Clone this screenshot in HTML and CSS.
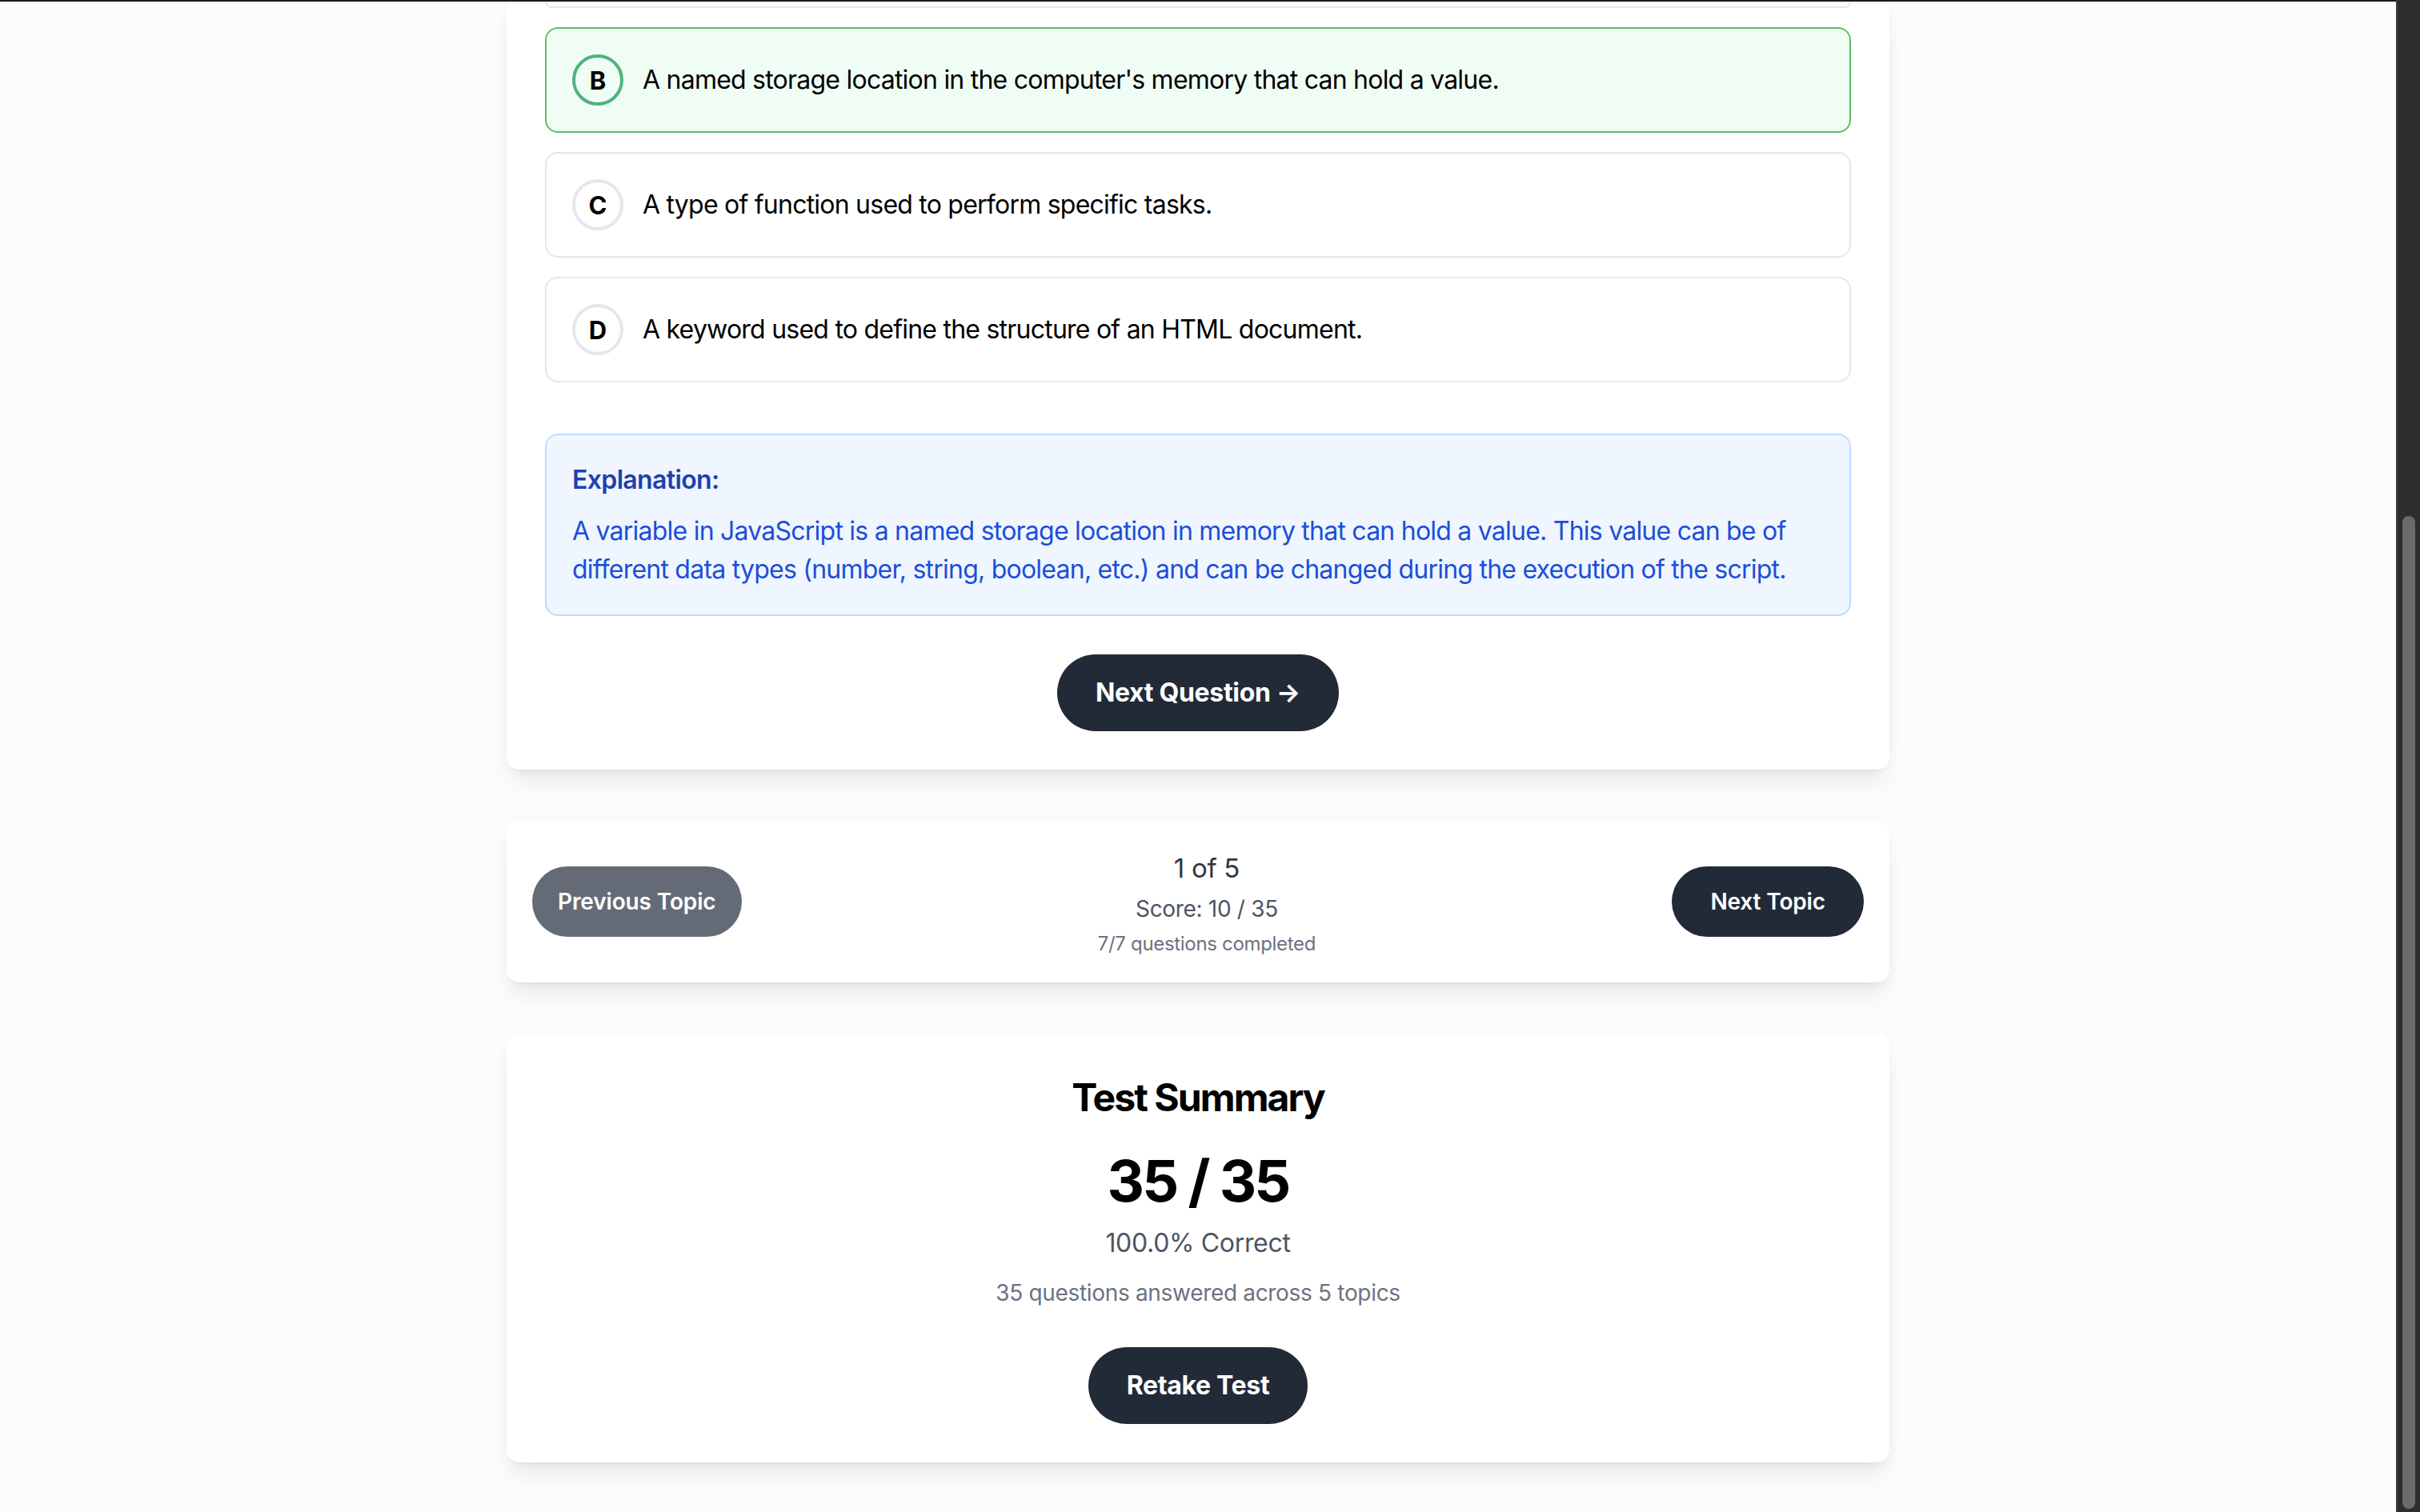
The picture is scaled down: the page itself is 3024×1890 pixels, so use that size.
FILE: index.html
```html
<!DOCTYPE html>
<html lang="en">
<head>
<meta charset="utf-8">
<title>Quiz</title>
<link rel="stylesheet" href="styles.css">
</head>
<body>
<div class="window">
  <main class="page">
    <div class="container">
      <section class="card quiz">
        <div class="options">
          <div class="option option-cut"></div>
          <div class="option selected">
            <span class="letter">B</span>
            <span class="option-text">A named storage location in the computer's memory that can hold a value.</span>
          </div>
          <div class="option">
            <span class="letter">C</span>
            <span class="option-text">A type of function used to perform specific tasks.</span>
          </div>
          <div class="option">
            <span class="letter">D</span>
            <span class="option-text">A keyword used to define the structure of an HTML document.</span>
          </div>
        </div>
        <div class="explanation">
          <h3 class="explanation-title">Explanation:</h3>
          <p class="explanation-text">A variable in JavaScript is a named storage location in memory that can hold a value. This value can be of different data types (number, string, boolean, etc.) and can be changed during the execution of the script.</p>
        </div>
        <div class="actions">
          <button class="btn btn-dark">Next Question →</button>
        </div>
      </section>

      <section class="card nav">
        <button class="btn-sm btn-gray">Previous Topic</button>
        <div class="nav-info">
          <div class="nav-count">1 of 5</div>
          <div class="nav-score">Score: 10 / 35</div>
          <div class="nav-done">7/7 questions completed</div>
        </div>
        <button class="btn-sm btn-dark btn-wide">Next Topic</button>
      </section>

      <section class="card summary">
        <h2 class="summary-title">Test Summary</h2>
        <div class="summary-score">35 / 35</div>
        <div class="summary-pct">100.0% Correct</div>
        <div class="summary-sub">35 questions answered across 5 topics</div>
        <div class="actions">
          <button class="btn btn-dark">Retake Test</button>
        </div>
      </section>
    </div>
  </main>
  <aside class="scrollbar"><div class="thumb"></div></aside>
</div>
</body>
</html>
```

FILE: styles.css
```css
* { box-sizing: border-box; }
html, body {
  margin: 0;
  padding: 0;
  height: 100%;
  overflow: hidden;
}
body {
  font-family: Inter, "Liberation Sans", Arial, sans-serif;
  color: #000;
  background: #fcfcfc;
  letter-spacing: -0.02em;
}
.window {
  display: flex;
  height: 1890px;
  width: 3024px;
}
.page {
  flex: 1;
  border-top: 2px solid #1a1a1a;
  background: #fcfcfc;
  overflow: hidden;
}
.container {
  width: 1728px;
  margin: 0 auto;
  display: flex;
  flex-direction: column;
  gap: 64px;
}
.card {
  background: #fff;
  border-radius: 16px;
  box-shadow: 0 20px 30px -6px rgba(0,0,0,0.08), 0 8px 12px -8px rgba(0,0,0,0.08), 0 0 24px rgba(0,0,0,0.02);
}
.quiz {
  padding: 0 48px 48px;
  border-radius: 0 0 16px 16px;
}
.options {
  display: flex;
  flex-direction: column;
  gap: 24px;
}
.option {
  display: flex;
  align-items: center;
  gap: 24px;
  padding: 32px;
  border: 2px solid #e5e7eb;
  border-radius: 16px;
  background: #fff;
}
.option-cut {
  height: 8px;
  padding: 0;
  border-top: none;
  border-radius: 0 0 16px 16px;
}
.option.selected {
  background: #f0fdf4;
  border-color: #5dbf6c;
}
.letter {
  flex: none;
  width: 64px;
  height: 64px;
  border: 4px solid #e5e7eb;
  border-radius: 50%;
  display: flex;
  align-items: center;
  justify-content: center;
  font-weight: 700;
  font-size: 31px;
  letter-spacing: 0;
  color: #000;
}
.selected .letter {
  border-color: #50b27e;
}
.option-text {
  font-size: 32px;
  line-height: 48px;
  letter-spacing: -0.024em;
  color: #000;
}
.explanation {
  margin-top: 64px;
  padding: 32px;
  background: #eff6ff;
  border: 2px solid #bfdbfe;
  border-radius: 16px;
}
.explanation-title {
  margin: 0 0 16px;
  font-size: 32px;
  line-height: 48px;
  font-weight: 600;
  letter-spacing: -0.02em;
  color: #1e40af;
}
.explanation-text {
  margin: 0;
  font-size: 32px;
  line-height: 48px;
  letter-spacing: -0.024em;
  color: #1d4ed8;
}
.actions {
  display: flex;
  justify-content: center;
  margin-top: 48px;
}
.btn {
  border: none;
  border-radius: 9999px;
  padding: 24px 48px;
  font-family: inherit;
  font-size: 32px;
  line-height: 48px;
  font-weight: 700;
  letter-spacing: -0.01em;
  color: #fff;
}
.btn-dark { background: #222a38; color: #fff; }
.btn-gray { background: #656b76; color: #fff; }
.btn-sm {
  border: none;
  border-radius: 9999px;
  padding: 24px 32px;
  font-family: inherit;
  font-size: 28px;
  line-height: 40px;
  font-weight: 600;
  letter-spacing: -0.005em;
}
.btn-wide {
  padding: 24px 48px;
}
.nav {
  display: flex;
  align-items: center;
  justify-content: space-between;
  padding: 32px;
}
.nav-info {
  text-align: center;
}
.nav-count {
  font-size: 33px;
  line-height: 54px;
  color: #303641;
}
.nav-score {
  margin-top: 4px;
  font-size: 28px;
  line-height: 40px;
  color: #4b5563;
}
.nav-done {
  margin-top: 8px;
  font-size: 24px;
  line-height: 32px;
  color: #6b7280;
}
.summary {
  padding: 48px;
  text-align: center;
}
.summary-title {
  margin: 0 0 32px;
  font-size: 48px;
  line-height: 64px;
  font-weight: 700;
  letter-spacing: -0.04em;
  color: #000;
}
.summary-score {
  font-size: 72px;
  line-height: 80px;
  font-weight: 700;
  letter-spacing: -0.04em;
  color: #000;
}
.summary-pct {
  margin-top: 10px;
  font-size: 32px;
  line-height: 56px;
  color: #4b5563;
}
.summary-sub {
  margin-top: 14px;
  font-size: 28px;
  line-height: 40px;
  color: #6b7280;
}
.scrollbar {
  flex: none;
  width: 30px;
  background: #2e2e2e;
  border-left: 2px solid #3a3a3a;
  padding-left: 6px;
}
.thumb {
  width: 16px;
  margin-top: 645px;
  height: 1241px;
  border-radius: 8px;
  background: #6b6b6b;
}
```
